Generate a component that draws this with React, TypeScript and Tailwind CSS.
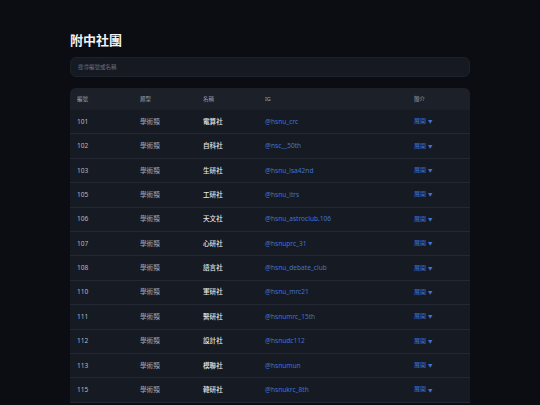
import React from 'react';

type Club = {
  id: string;
  category: string;
  name: string;
  ig: string;
};

const clubs: Club[] = [
  { id: '101', category: '學術類', name: '電算社', ig: '@hsnu_crc' },
  { id: '102', category: '學術類', name: '自科社', ig: '@nsc__50th' },
  { id: '103', category: '學術類', name: '生研社', ig: '@hsnu_lsa42nd' },
  { id: '105', category: '學術類', name: '工研社', ig: '@hsnu_itrs' },
  { id: '106', category: '學術類', name: '天文社', ig: '@hsnu_astroclub.106' },
  { id: '107', category: '學術類', name: '心研社', ig: '@hsnuprc_31' },
  { id: '108', category: '學術類', name: '語言社', ig: '@hsnu_debate_club' },
  { id: '110', category: '學術類', name: '軍研社', ig: '@hsnu_mrc21' },
  { id: '111', category: '學術類', name: '醫研社', ig: '@hsnumrc_15th' },
  { id: '112', category: '學術類', name: '設計社', ig: '@hsnudc112' },
  { id: '113', category: '學術類', name: '模聯社', ig: '@hsnumun' },
  { id: '115', category: '學術類', name: '韓研社', ig: '@hsnukrc_8th' },
];

const cols = 'grid grid-cols-[63px_63px_62px_149px_1fr] items-center px-[7px]';

export default function App() {
  return (
    <div className="min-h-[405px] bg-[#0b0d13] font-['Noto_Sans','Noto_Sans_CJK_TC',sans-serif]">
      <div className="mx-auto w-[400px] pt-[30px]">
        <h1 className="text-[13px] font-bold leading-[20px] text-[#f1f3f6]">附中社團</h1>

        <div className="mt-[7px] flex h-[20px] items-center rounded-[6px] border border-[#1c212b] bg-[#151922] px-[7px]">
          <span className="text-[5.5px] text-[#6b7280]">搜尋編號或名稱</span>
        </div>

        <div className="mt-[11px] overflow-hidden rounded-t-[6px] bg-[#161a22]">
          <div className={`${cols} h-[22px] bg-[#1c2029] text-[5.5px] text-[#9ca3af]`}>
            <span>編號</span>
            <span>類型</span>
            <span>名稱</span>
            <span>IG</span>
            <span>簡介</span>
          </div>
          {clubs.map((club) => (
            <div
              key={club.id}
              className={`${cols} h-[24.4px] border-b border-[#232833] text-[6.6px]`}
            >
              <span className="text-[#b4b9c2]">{club.id}</span>
              <span className="text-[#a7acb5]">{club.category}</span>
              <span className="font-medium text-[#e5e7eb]">{club.name}</span>
              <span className="text-[#3f74d6]">{club.ig}</span>
              <span className="flex items-center gap-[2px] text-[6px] text-[#3f74d6]">
                展開
                <span className="text-[4.5px]">▼</span>
              </span>
            </div>
          ))}
        </div>
      </div>
    </div>
  );
}
